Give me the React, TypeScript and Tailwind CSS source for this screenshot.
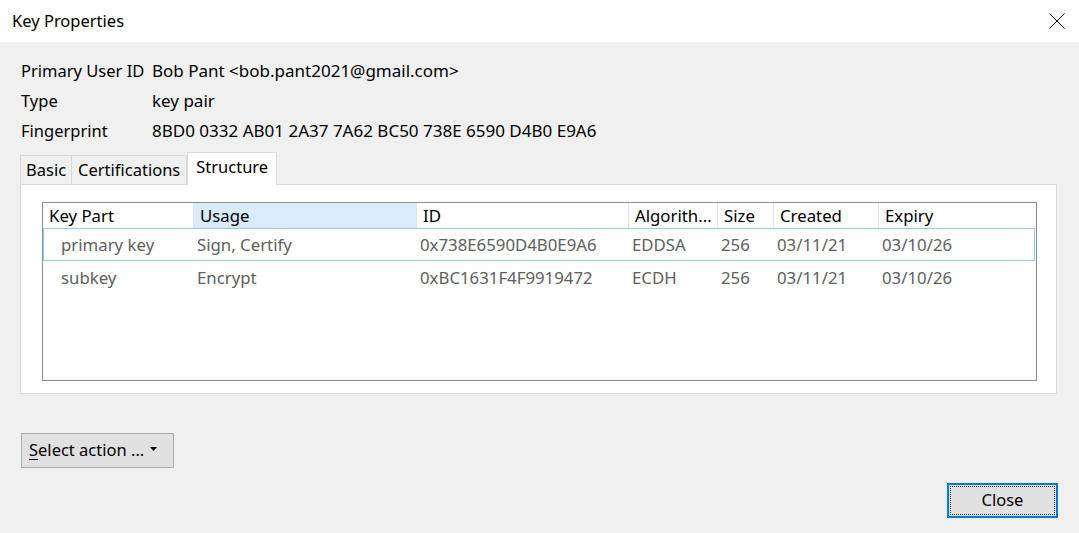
import React from "react";

const columns = [
  { label: "Key Part", width: "w-[150px]" },
  { label: "Usage", width: "w-[223px]" },
  { label: "ID", width: "w-[212px]" },
  { label: "Algorith...", width: "w-[89px]" },
  { label: "Size", width: "w-[56px]" },
  { label: "Created", width: "w-[105px]" },
  { label: "Expiry", width: "flex-1" },
];

const rows = [
  ["primary key", "Sign, Certify", "0x738E6590D4B0E9A6", "EDDSA", "256", "03/11/21", "03/10/26"],
  ["subkey", "Encrypt", "0xBC1631F4F9919472", "ECDH", "256", "03/11/21", "03/10/26"],
];

function InfoRow({ label, value }: { label: string; value: string }) {
  return (
    <div className="flex h-[30px] items-center">
      <div className="w-[131px]">{label}</div>
      <div className="text-[17px]">{value}</div>
    </div>
  );
}

export default function App() {
  return (
    <div
      className="flex h-[533px] w-[1079px] flex-col overflow-hidden bg-[#f0f0f0] text-[16.5px] text-black"
      style={{ fontFamily: '"Noto Sans", "Open Sans", sans-serif' }}
    >
      {/* title bar */}
      <div className="flex h-[42px] shrink-0 items-center justify-between bg-white pl-[12px] pr-[14px]">
        <span>Key Properties</span>
        <svg width="16" height="16" viewBox="0 0 16 16" className="mt-[-1px]">
          <path d="M0.5 0.5 L15.5 15.5 M15.5 0.5 L0.5 15.5" stroke="#000" strokeWidth="1" fill="none" />
        </svg>
      </div>

      <div className="flex flex-1 flex-col px-[20px]">
        {/* key summary */}
        <div className="pl-[1px] pt-[14px]">
          <InfoRow label="Primary User ID" value="Bob Pant <bob.pant2021@gmail.com>" />
          <InfoRow label="Type" value="key pair" />
          <InfoRow label="Fingerprint" value="8BD0 0332 AB01 2A37 7A62 BC50 738E 6590 D4B0 E9A6" />
        </div>

        {/* tabs */}
        <div className="mt-[6px] flex h-[32px] items-end">
          <div className="flex h-[29px] items-center border border-b-0 border-[#d9d9d9] px-[5px]">Basic</div>
          <div className="flex h-[29px] items-center border border-b-0 border-l-0 border-[#d9d9d9] px-[6px]">
            Certifications
          </div>
          <div className="relative z-10 mb-[-1px] flex h-[33px] items-start border border-b-0 border-[#d9d9d9] bg-white px-[8px] pt-[2px]">
            Structure
          </div>
        </div>

        <div className="h-[210px] w-[1037px] border border-[#d9d9d9] bg-white pl-[21px] pt-[17px]">
          <div className="flex h-[179px] w-[995px] flex-col border border-[#8c8c8c] bg-white text-[16.8px]">
            <div className="flex h-[25px] shrink-0">
              {columns.map((c, i) => (
                <div
                  key={c.label}
                  className={`${c.width} flex items-center whitespace-nowrap ${i === 0 ? "pl-[6px]" : "border-l border-[#e5e5e5] pl-[6px]"} ${
                    i === 1 ? "bg-[#d9ebf9]" : ""
                  }`}
                >
                  {c.label}
                </div>
              ))}
            </div>
            {rows.map((r, ri) => (
              <div
                key={ri}
                className={`flex h-[33px] shrink-0 text-[#606060] ${ri === 0 ? "mr-[1px] border border-[#99c9ef]" : "border border-transparent"}`}
              >
                {r.map((cell, ci) => (
                  <div
                    key={ci}
                    className={`${columns[ci].width} flex items-center whitespace-nowrap ${ci === 0 ? "pl-[17px]" : "pl-[3px]"}`}
                  >
                    {cell}
                  </div>
                ))}
              </div>
            ))}
          </div>
        </div>

        {/* action dropdown */}
        <div className="mt-[39px] pl-[1px]">
          <button className="flex h-[35px] w-[153px] items-center border border-[#adadad] bg-[#e1e1e1] pl-[7px]">
            <span>
              <span className="underline underline-offset-[3px]">S</span>elect action ...
            </span>
            <svg width="7" height="4" viewBox="0 0 7 4" className="ml-[6px] mt-[-4px]">
              <path d="M0 0 L7 0 L3.5 4 Z" fill="#000" />
            </svg>
          </button>
        </div>

        <div className="mt-[15px] flex justify-end pr-[1px]">
          <button className="relative flex h-[35px] w-[111px] items-center justify-center border-2 border-[#0078d7] bg-[#e1e1e1]">
            <span className="absolute inset-[1px] border border-dotted border-[#333]" />
            <span>Close</span>
          </button>
        </div>
      </div>
    </div>
  );
}
